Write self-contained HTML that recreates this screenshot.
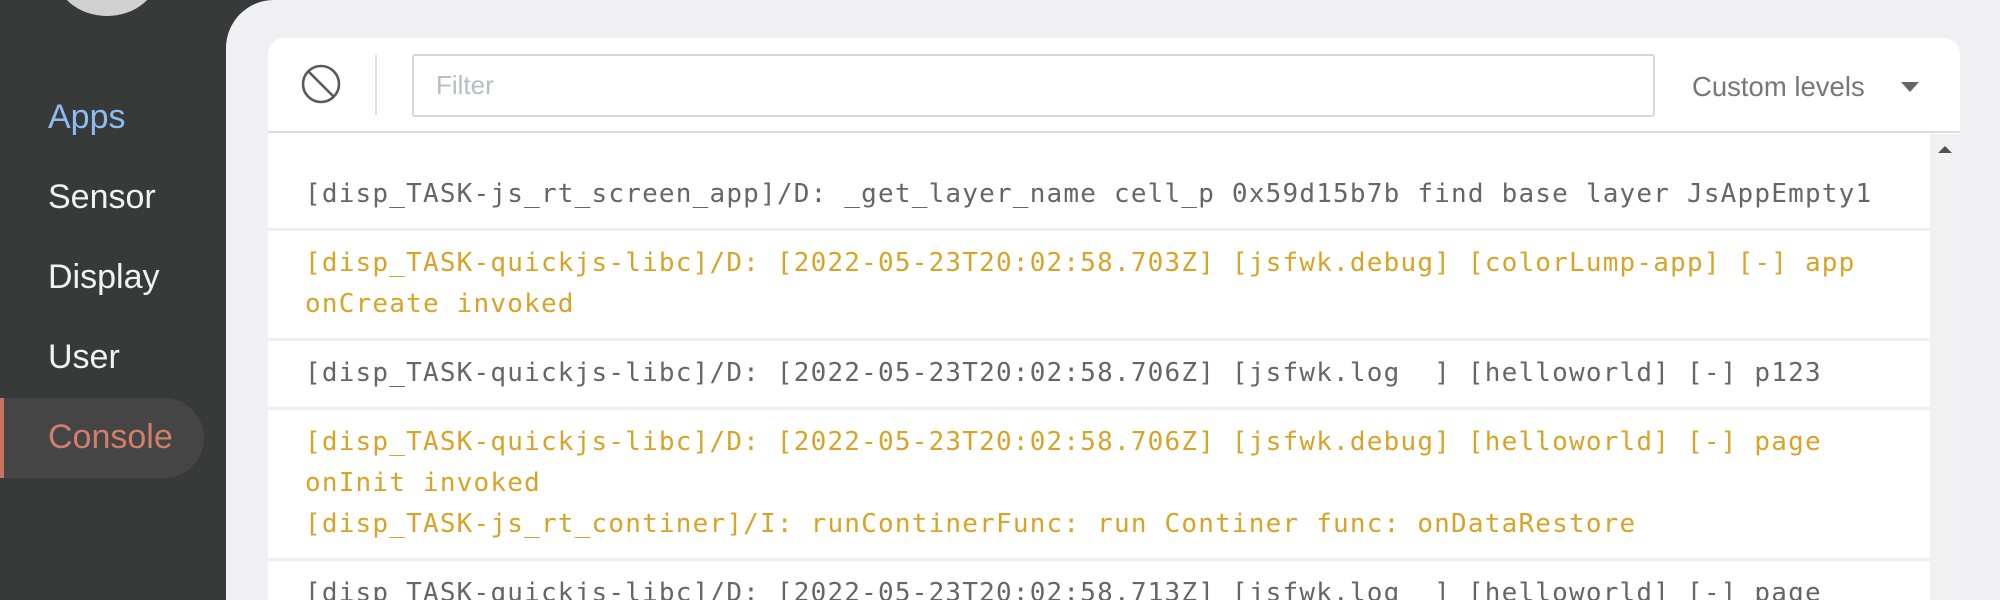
<!DOCTYPE html>
<html><head><meta charset="utf-8"><style>
*{margin:0;padding:0;box-sizing:border-box}
html,body{width:2000px;height:600px;overflow:hidden}
body{background:#383a39;position:relative;font-family:"Liberation Sans",sans-serif}
.avatar{position:absolute;left:55px;top:-72px;width:104px;height:88px;border-radius:50%;background:#d0d0d0}
.nav{position:absolute;left:48px;font-size:34px;color:#f2f2f2}
.pill{position:absolute;left:0;top:398px;width:204px;height:80px;background:#454545;border-radius:0 40px 40px 0;border-left:4px solid #c87562}
.main{position:absolute;left:226px;top:0;width:1774px;height:600px;background:#efeff4;border-top-left-radius:48px}
.card{position:absolute;left:268px;top:38px;width:1692px;height:562px;background:#fff;border-radius:16px 16px 0 0;overflow:hidden}
.tool{position:absolute;left:0;top:0;width:1692px;height:95px;border-bottom:2px solid #dcdcdc}
.filter{position:absolute;left:144px;top:16px;width:1243px;height:63px;border:2px solid #d6d6d6;border-radius:3px;font-size:26px;color:#b8bcc4;padding:14px 0 0 22px}
.div{position:absolute;left:107px;top:17px;width:2px;height:60px;background:#e2e2e2}
.cl{position:absolute;left:1424px;top:33px;font-size:27.5px;color:#777}
.tri{position:absolute;left:1633px;top:44px;width:0;height:0;border-left:9px solid transparent;border-right:9px solid transparent;border-top:10px solid #666}
.sb{position:absolute;left:1662px;top:96px;width:30px;height:466px;background:#f1f1f1}
.up{position:absolute;left:8px;top:12px;width:0;height:0;border-left:7px solid transparent;border-right:7px solid transparent;border-bottom:7px solid #505050}
.log{position:absolute;left:0;top:96px;width:1662px;height:466px;overflow:hidden}
.row{font-family:"DejaVu Sans Mono",monospace;font-size:26px;letter-spacing:1.2px;line-height:41px;padding:12px 0 13px 37px;border-bottom:3px solid #f0f0f0;white-space:pre;color:#666}
.y{color:#d6a428}
</style></head><body>
<div class="avatar"></div>
<div class="pill"></div>
<div class="nav" style="top:98px;color:#8cbcf2">Apps</div>
<div class="nav" style="top:178px">Sensor</div>
<div class="nav" style="top:258px">Display</div>
<div class="nav" style="top:338px">User</div>
<div class="nav" style="top:418px;color:#d0806a">Console</div>
<div class="main"></div>
<div class="card">
 <div class="tool">
  <svg style="position:absolute;left:32px;top:25px" width="42" height="42" viewBox="0 0 42 42"><circle cx="21" cy="21" r="18" fill="none" stroke="#5a5a5a" stroke-width="2.6"/><line x1="8.5" y1="8.5" x2="33.5" y2="33.5" stroke="#5a5a5a" stroke-width="2.6"/></svg>
  <div class="div"></div>
  <div class="filter">Filter</div>
  <div class="cl">Custom levels</div>
  <div class="tri"></div>
 </div>
 <div class="sb"><div class="up"></div></div>
 <div class="log">
  <div class="row" style="padding-top:40px">[disp_TASK-js_rt_screen_app]/D: _get_layer_name cell_p 0x59d15b7b find base layer JsAppEmpty1</div>
  <div class="row y">[disp_TASK-quickjs-libc]/D: [2022-05-23T20:02:58.703Z] [jsfwk.debug] [colorLump-app] [-] app
onCreate invoked</div>
  <div class="row">[disp_TASK-quickjs-libc]/D: [2022-05-23T20:02:58.706Z] [jsfwk.log  ] [helloworld] [-] p123</div>
  <div class="row y">[disp_TASK-quickjs-libc]/D: [2022-05-23T20:02:58.706Z] [jsfwk.debug] [helloworld] [-] page
onInit invoked
[disp_TASK-js_rt_continer]/I: runContinerFunc: run Continer func: onDataRestore</div>
  <div class="row">[disp_TASK-quickjs-libc]/D: [2022-05-23T20:02:58.713Z] [jsfwk.log  ] [helloworld] [-] page</div>
 </div>
</div>
</body></html>
